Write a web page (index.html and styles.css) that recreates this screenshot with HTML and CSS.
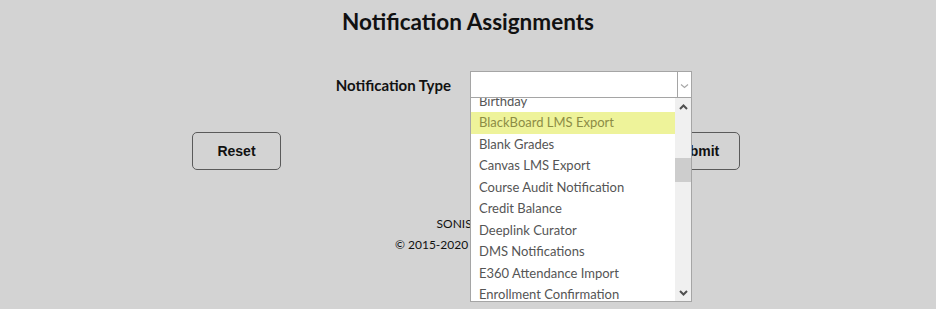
FILE: index.html
```html
<!DOCTYPE html>
<html lang="en">
<head>
  <meta charset="UTF-8">
  <title>Notification Assignments</title>
  <link rel="stylesheet" href="styles.css">
</head>
<body>
  <h1 class="titulo">Notification Assignments</h1>

  <div class="linha-campo">
    <label class="rotulo">Notification Type</label>
    <div class="combo">
      <div class="combo-caixa">
        <span class="combo-valor"></span>
        <span class="combo-seta">
          <svg width="9" height="6" viewBox="0 0 9 6"><path d="M1 1.5 L4.5 4.5 L8 1.5" fill="none" stroke="#a8a8a8" stroke-width="1.2"/></svg>
        </span>
      </div>
      <div class="lista">
        <ul class="opcoes">
          <li>Birthday</li>
          <li class="ativo">BlackBoard LMS Export</li>
          <li>Blank Grades</li>
          <li>Canvas LMS Export</li>
          <li>Course Audit Notification</li>
          <li>Credit Balance</li>
          <li>Deeplink Curator</li>
          <li>DMS Notifications</li>
          <li>E360 Attendance Import</li>
          <li>Enrollment Confirmation</li>
          <li>Enrollment Verification</li>
        </ul>
        <div class="rolagem">
          <span class="seta-rolagem">
            <svg width="9" height="6" viewBox="0 0 9 6"><path d="M1 5 L4.5 1.5 L8 5" fill="none" stroke="#505050" stroke-width="2"/></svg>
          </span>
          <div class="trilho"><div class="polegar"></div></div>
          <span class="seta-rolagem">
            <svg width="9" height="6" viewBox="0 0 9 6"><path d="M1 1 L4.5 4.5 L8 1" fill="none" stroke="#505050" stroke-width="2"/></svg>
          </span>
        </div>
      </div>
    </div>
  </div>

  <div class="botoes">
    <button class="botao">Reset</button>
    <button class="botao">Submit</button>
  </div>

  <div class="rodape">
    <div>SONIS Web</div>
    <div>&copy; 2015-2020 Jenzabar, Inc.</div>
  </div>
</body>
</html>
```

FILE: styles.css
```css
html, body {
  min-height: 100vh;
}

body {
  margin: 0;
  background-color: #d3d3d3;
  font-family: Lato, "Liberation Sans", sans-serif;
  color: #111;
}

.titulo {
  margin: 0;
  padding-top: 9px;
  text-align: center;
  font-size: 22.5px;
  font-weight: bold;
  line-height: 26px;
}

.linha-campo {
  display: grid;
  grid-template-columns: 1fr 1fr;
  column-gap: 19px;
  padding-right: 15px;
  margin-top: 36px;
  align-items: center;
}

.rotulo {
  text-align: right;
  font-size: 15px;
  font-weight: bold;
}

.combo {
  position: relative;
  width: 222px;
}

.combo-caixa {
  display: flex;
  height: 25px;
  background: #fff;
  border: 1px solid #a5a5a5;
}

.combo-valor {
  flex: 1;
}

.combo-seta {
  width: 13px;
  border-left: 1px solid #a5a5a5;
  display: flex;
  align-items: center;
  justify-content: center;
  padding-top: 2px;
}

.lista {
  position: absolute;
  top: 26px;
  left: 0;
  width: 220px;
  height: 203px;
  background: #fff;
  border: 1px solid #a5a5a5;
  display: flex;
  overflow: hidden;
  z-index: 2;
}

.opcoes {
  list-style: none;
  margin: -7.5px 0 0 0;
  padding: 0;
  flex: 1;
}

.opcoes li {
  height: 21.5px;
  line-height: 21.5px;
  padding-left: 8px;
  font-size: 13px;
  color: #555;
  white-space: nowrap;
}

.opcoes li.ativo {
  background: #eef39a;
  color: #8c8c45;
}

.rolagem {
  width: 16px;
  background: #f0f0f0;
  display: flex;
  flex-direction: column;
}

.seta-rolagem {
  height: 17px;
  display: flex;
  align-items: center;
  justify-content: center;
}

.trilho {
  flex: 1;
}

.polegar {
  margin-top: 43px;
  height: 24px;
  background: #cdcdcd;
}

.botoes {
  display: flex;
  justify-content: center;
  gap: 370px;
  padding-right: 4px;
  margin-top: 34px;
}

.botao {
  width: 89px;
  height: 38px;
  background: transparent;
  border: 1px solid #5a5a5a;
  border-radius: 5px;
  font-family: "Liberation Sans", Arial, sans-serif;
  font-size: 14px;
  font-weight: bold;
  color: #111;
}

.rodape {
  margin-top: 43px;
  text-align: center;
  font-size: 12px;
  line-height: 21px;
}
```
